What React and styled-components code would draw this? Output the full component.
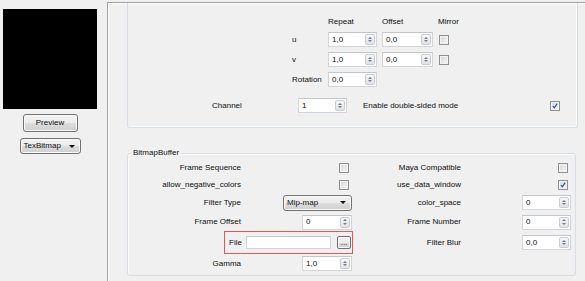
import React from "react";
import styled, { createGlobalStyle } from "styled-components";

const GlobalStyle = createGlobalStyle`
  html, body {
    margin: 0;
    padding: 0;
    background: #f0f0f0;
    overflow: hidden;
  }
  body {
    font-family: "Liberation Sans", Arial, sans-serif;
    font-size: 8px;
    line-height: 10px;
    color: #0d0d0d;
  }
`;

const Window = styled.div`
  width: 585px;
  height: 281px;
  display: flex;
  align-items: flex-start;
  overflow: hidden;
`;

const SidePane = styled.div`
  width: 100px;
  margin-right: 7px;
  padding-top: 9px;
  display: flex;
  flex-direction: column;
  align-items: center;
`;

const PreviewSwatch = styled.div`
  width: 94px;
  height: 100px;
  background: #000;
`;

const PushButton = styled.button`
  box-sizing: border-box;
  width: ${(props) => props.$w}px;
  height: ${(props) => props.$h}px;
  margin-top: ${(props) => props.$mt || 0}px;
  padding: 0;
  border: 1px solid #707070;
  border-radius: 3px;
  background: linear-gradient(#f2f2f2 0%, #ebebeb 50%, #dddddd 51%, #cfcfcf 100%);
  box-shadow: inset 0 0 0 1px #fbfbfb;
  font: inherit;
  color: inherit;
  display: flex;
  align-items: center;
  justify-content: center;
`;

const ComboBox = styled.div`
  box-sizing: border-box;
  width: ${(props) => props.$w}px;
  height: 16px;
  margin-top: ${(props) => props.$mt || 0}px;
  padding: 0 5px 0 3px;
  border: 1px solid #707070;
  border-radius: 3px;
  background: linear-gradient(#f2f2f2 0%, #ebebeb 50%, #dddddd 51%, #cfcfcf 100%);
  box-shadow: inset 0 0 0 1px #fbfbfb;
  display: flex;
  align-items: center;
  justify-content: space-between;
  justify-self: end;
`;

const ComboArrow = styled.span`
  width: 0;
  height: 0;
  border-left: 3px solid transparent;
  border-right: 3px solid transparent;
  border-top: 3px solid #111;
`;

const Stage = styled.div`
  flex: 1;
  height: 279px;
  margin-top: 2px;
  padding-left: 19px;
  border-top: 1px solid #a0a0a0;
  border-left: 1px solid #a0a0a0;
  box-shadow: inset 1px 1px 0 #ffffff;
`;

const TransformBox = styled.div`
  box-sizing: border-box;
  width: 451px;
  padding: 14px 17px 14px 0;
  border: 1px solid #d5dfe5;
  border-top: none;
  border-radius: 0 0 3px 3px;
  box-shadow: inset -1px -1px 0 #fcfcfc;
`;

const TransformGrid = styled.div`
  margin-left: 164px;
  display: grid;
  grid-template-columns: 31px 49px 51px 11px;
  grid-template-rows: 10px 15px 15px 15px;
  column-gap: 5px;
  row-gap: 5px;
  align-items: center;
`;

const ChannelRow = styled.div`
  height: 15px;
  margin-top: 11px;
  padding-left: 84px;
  display: flex;
  align-items: center;
`;

const Label = styled.span`
  white-space: nowrap;
  width: ${(props) => (props.$w ? `${props.$w}px` : "auto")};
  flex: ${(props) => (props.$grow ? 1 : "none")};
  margin-left: ${(props) => props.$ml || 0}px;
  justify-self: ${(props) => (props.$end ? "end" : "start")};
`;

const BufferBox = styled.fieldset`
  box-sizing: border-box;
  width: 449px;
  margin: 20px 0 0 0;
  padding: 2px 3px 1px 0;
  min-width: 0;
  border: 1px solid #d5dfe5;
  border-radius: 3px;
  box-shadow: inset 1px 1px 0 #fcfcfc;
`;

const BoxTitle = styled.legend`
  margin-left: 3px;
  padding: 0 2px;
  line-height: 10px;
`;

const BufferGrid = styled.div`
  display: grid;
  grid-template-columns: 113px 111px 109px 110px;
  grid-template-rows: 16px 17px 19px 20px 21px 21px;
  align-items: center;
`;

const SpinFrame = styled.div`
  box-sizing: border-box;
  width: ${(props) => props.$w}px;
  height: 15px;
  padding: 1px;
  border: 1px solid #d2d4d8;
  border-top-color: #c2c5ca;
  background: #fff;
  display: flex;
  align-items: stretch;
  justify-self: end;
`;

const SpinValue = styled.span`
  flex: 1;
  padding-left: 2px;
  display: flex;
  align-items: center;
`;

const SpinButtons = styled.div`
  box-sizing: border-box;
  width: 10px;
  border: 1px solid #c9ccd1;
  border-radius: 2px;
  background: linear-gradient(#f6f6f6, #e3e3e3);
  display: flex;
  flex-direction: column;
  align-items: center;
  justify-content: space-evenly;
`;

const SpinArrow = styled.span`
  width: 0;
  height: 0;
  border-left: 2px solid transparent;
  border-right: 2px solid transparent;
  border-${(props) => (props.$down ? "top" : "bottom")}: 2px solid #6a7c93;
`;

const CheckBox = styled.span`
  box-sizing: border-box;
  width: 10px;
  height: 10px;
  margin-right: ${(props) => props.$mr || 0}px;
  border: 1px solid #8f8f8f;
  background: linear-gradient(135deg, #d8d8d8, #f7f7f7);
  box-shadow: inset 0 0 0 1px #f4f4f4;
  display: flex;
  align-items: center;
  justify-content: center;
  justify-self: end;
`;

const FileField = styled.div`
  grid-column: 1 / 3;
  justify-self: end;
  box-sizing: border-box;
  width: 129px;
  height: 23px;
  margin-right: -1px;
  padding: 0 1px 0 4px;
  border: 1px solid #e4585d;
  display: flex;
  align-items: center;
`;

const PathInput = styled.div`
  box-sizing: border-box;
  flex: 1;
  height: 13px;
  margin: 0 6px 0 4px;
  border: 1px solid #d2d4d8;
  border-top-color: #c2c5ca;
  background: #fff;
`;

const BrowseButton = styled(PushButton)`
  border-radius: 2px;
  align-items: flex-end;
  padding-bottom: 2px;
  line-height: 6px;
`;

const Spin = ({ value, w }) => (
  <SpinFrame $w={w}>
    <SpinValue>{value}</SpinValue>
    <SpinButtons>
      <SpinArrow />
      <SpinArrow $down />
    </SpinButtons>
  </SpinFrame>
);

const Check = ({ checked, mr }) => (
  <CheckBox $mr={mr}>
    {checked && (
      <svg width="6" height="6" viewBox="0 0 7 7">
        <path d="M1 3.6 L2.8 5.6 L6 0.8" fill="none" stroke="#2b4fa0" strokeWidth="1.4" />
      </svg>
    )}
  </CheckBox>
);

const App = () => {
  return (
    <Window>
      <GlobalStyle />
      <SidePane>
        <PreviewSwatch />
        <PushButton $w={55} $h={18} $mt={5}>Preview</PushButton>
        <ComboBox $w={61} $mt={6}>
          <span>TexBitmap</span>
          <ComboArrow />
        </ComboBox>
      </SidePane>

      <Stage>
        <TransformBox>
          <TransformGrid>
            <span />
            <Label>Repeat</Label>
            <Label>Offset</Label>
            <Label>Mirror</Label>

            <Label>u</Label>
            <Spin value="1,0" w={49} />
            <Spin value="0,0" w={51} />
            <Check />

            <Label>v</Label>
            <Spin value="1,0" w={49} />
            <Spin value="0,0" w={51} />
            <Check />

            <Label>Rotation</Label>
            <Spin value="0,0" w={49} />
          </TransformGrid>

          <ChannelRow>
            <Label $w={86}>Channel</Label>
            <Spin value="1" w={49} />
            <Label $grow $ml={16}>Enable double-sided mode</Label>
            <Check checked />
          </ChannelRow>
        </TransformBox>

        <BufferBox>
          <BoxTitle>BitmapBuffer</BoxTitle>
          <BufferGrid>
            <Label $end>Frame Sequence</Label>
            <Check mr={3} />
            <Label $end>Maya Compatible</Label>
            <Check mr={3} />

            <Label $end>allow_negative_colors</Label>
            <Check mr={3} />
            <Label $end>use_data_window</Label>
            <Check checked mr={3} />

            <Label $end>Filter Type</Label>
            <ComboBox $w={69}>
              <span>Mip-map</span>
              <ComboArrow />
            </ComboBox>
            <Label $end>color_space</Label>
            <Spin value="0" w={49} />

            <Label $end>Frame Offset</Label>
            <Spin value="0" w={50} />
            <Label $end>Frame Number</Label>
            <Spin value="0" w={49} />

            <FileField>
              <Label>File</Label>
              <PathInput />
              <BrowseButton $w={14} $h={13}>...</BrowseButton>
            </FileField>
            <Label $end>Filter Blur</Label>
            <Spin value="0,0" w={49} />

            <Label $end>Gamma</Label>
            <Spin value="1,0" w={50} />
          </BufferGrid>
        </BufferBox>
      </Stage>
    </Window>
  );
};

export default App;
